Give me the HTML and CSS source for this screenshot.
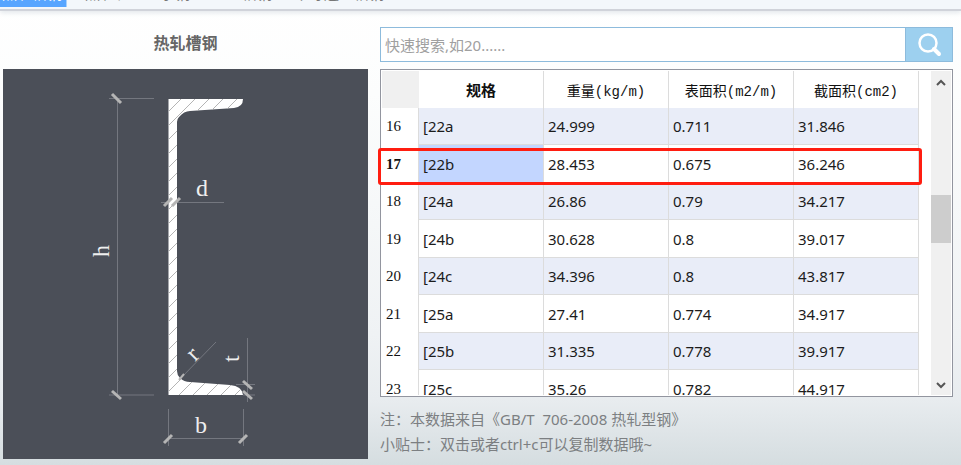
FILE: index.html
```html
<!DOCTYPE html>
<html lang="zh-CN">
<head>
<meta charset="utf-8">
<title>热轧槽钢</title>
<link rel="stylesheet" href="styles.css">
</head>
<body>
<nav class="tabs">
  <a class="tab active" href="#channel">热轧槽钢</a>
  <a class="tab" href="#ibeam">热轧轻型工字钢</a>
  <a class="tab" href="#type">工型槽钢</a>
  <a class="tab" href="#unequal">不等边型槽钢</a>
</nav>
<main class="content">
  <section class="figure">
    <h1 class="title">热轧槽钢</h1>
    <svg class="drawing" viewBox="3 69 365 390" role="img" aria-label="热轧槽钢截面">
      <defs>
        <pattern id="hatch" width="14" height="14" patternUnits="userSpaceOnUse">
          <path d="M-1 15L15 -1M-1 1L1 -1M13 15L15 13" stroke="#b4b4b4" stroke-width="1"/>
        </pattern>
      </defs>
      <g class="dim">
        <path d="M109 98.500H154M109 395H154M117.500 98V395M161 202.500H224M168.500 409V446M243.500 409V446M168 438.500H243M247.500 338V402M236 384.500H255M243 395H255M180 379L216 342"/>
      </g>
      <path class="steel" d="M168.500 99H243Q243 107 234 108L190 111Q184 111 179 117Q177 119 177 122V371Q177 375 180 378Q184 382 190 382L230 385Q242 386 243 395H168.500Z"/>
      <path fill="url(#hatch)" d="M168.500 99H243Q243 107 234 108L190 111Q184 111 179 117Q177 119 177 122V371Q177 375 180 378Q184 382 190 382L230 385Q242 386 243 395H168.500Z"/>
      <path class="tick" d="M112 94L121 103M112 391L121 399M164 206L172 198M172 206L180 198M164 443L172 435M239 443L247 435M243 381L252 389M243 391L252 399"/>
      <path class="leader" d="M179 380L184 374"/>
      <g class="letters">
        <text x="196" y="196">d</text>
        <text x="195" y="433">b</text>
        <text transform="translate(109 257) rotate(-90)">h</text>
        <text transform="translate(239 362) rotate(-90)">t</text>
        <text transform="translate(195 362) rotate(-45)">r</text>
      </g>
    </svg>
  </section>
  <section class="data">
    <form class="search">
      <input class="query" type="text" aria-label="快速搜索" placeholder="快速搜索,如20......">
      <button class="go" type="button" aria-label="搜索">
        <svg width="26" height="26" viewBox="0 0 26 26"><circle cx="12" cy="11" r="8.500" fill="none" stroke="#fff" stroke-width="2.500"/><path d="M18 17L23 22" stroke="#fff" stroke-width="4" stroke-linecap="round"/></svg>
      </button>
    </form>
    <div class="grid-wrap">
      <div class="grid">
        <div class="viewport">
        <table class="sections">
          <thead><tr><td class="corner"></td><th class="key">规格</th><th>重量(kg/m)</th><th>表面积(m2/m)</th><th>截面积(cm2)</th></tr></thead>
          <tbody>
            <tr><th>16</th><td>[22a</td><td>24.999</td><td>0.711</td><td>31.846</td></tr>
            <tr class="current"><th>17</th><td class="selected">[22b</td><td>28.453</td><td>0.675</td><td>36.246</td></tr>
            <tr><th>18</th><td>[24a</td><td>26.86</td><td>0.79</td><td>34.217</td></tr>
            <tr><th>19</th><td>[24b</td><td>30.628</td><td>0.8</td><td>39.017</td></tr>
            <tr><th>20</th><td>[24c</td><td>34.396</td><td>0.8</td><td>43.817</td></tr>
            <tr><th>21</th><td>[25a</td><td>27.41</td><td>0.774</td><td>34.917</td></tr>
            <tr><th>22</th><td>[25b</td><td>31.335</td><td>0.778</td><td>39.917</td></tr>
            <tr><th>23</th><td>[25c</td><td>35.26</td><td>0.782</td><td>44.917</td></tr>
          </tbody>
        </table>
        </div>
        <div class="scrollbar">
          <svg width="12" height="8" viewBox="0 0 12 8"><path d="M2 6L6 2L10 6"/></svg>
          <div class="track"><div class="thumb"></div></div>
          <svg width="12" height="8" viewBox="0 0 12 8"><path d="M2 2L6 6L10 2"/></svg>
        </div>
      </div>
      <div class="marker"></div>
    </div>
    <div class="notes">
      <p>注：本数据来自《GB/T&nbsp; 706-2008 热轧型钢》</p>
      <p>小贴士：双击或者ctrl+c可以复制数据哦~</p>
    </div>
  </section>
</main>
</body>
</html>
```
FILE: styles.css
```css
* {
  box-sizing: border-box;
}

body {
  margin: 0;
  height: 100vh;
  overflow: hidden;
  display: flex;
  flex-direction: column;
  font: 15px "Noto Sans", "Noto Sans CJK SC", sans-serif;
  background: linear-gradient(#ffffff, #fcfdfd 20%, #eff2f4 72%, #e8ecef 86%, #d5dde0);
}

.tabs {
  display: flex;
  flex: none;
  gap: 2px;
  height: 11px;
  align-items: flex-end;
  background: #f3f7fb;
  border-bottom: 2px solid #d0d3da;
  box-shadow: 0 2px 5px #e3e8ec;
}

.tab {
  padding: 0 10px 6px;
  line-height: 20px;
  color: #777;
  text-decoration: none;
}

.tab.active {
  margin: 0 6px 2px 0;
  padding: 0 4px 4px 2px;
  color: #fff;
  background: #57a5ff;
  border-right: 1px solid #a9d0fb;
}

.content {
  flex: 1;
  min-height: 0;
  display: grid;
  grid-template-columns: 365fr 573fr;
  gap: 12px;
  padding: 16px 8px 6px 3px;
}

.figure,
.data {
  display: flex;
  flex-direction: column;
  min-width: 0;
  min-height: 0;
}

.title {
  margin: 0;
  flex: none;
  height: 42px;
  line-height: 32px;
  text-align: center;
  font-size: 16px;
  font-weight: 700;
  color: #666;
}

.drawing {
  flex: 1;
  min-height: 0;
  width: 100%;
  background: #4b4f58;
}

.dim path {
  fill: none;
  stroke: #74777f;
}

.steel {
  fill: #fff;
}

.tick {
  stroke: #b5b5b5;
  stroke-width: 3;
}

.leader {
  stroke: #b5b5b5;
  stroke-width: 2;
}

.letters {
  font: 24px "Liberation Serif", serif;
  fill: #eee;
}

.search {
  flex: none;
  display: flex;
  height: 35px;
  border: 1px solid #8dbbdc;
  background: #fff;
}

.query {
  flex: 1;
  min-width: 0;
  border: 0;
  padding: 0 4px;
  font: inherit;
  background: transparent;
  outline: 0;
}

.query::placeholder {
  color: #a0a0a0;
}

.go {
  width: 47px;
  padding: 0;
  border: 0;
  border-left: 1px solid #8dbbdc;
  background: #9dd0ef;
  display: grid;
  place-items: center;
}

.grid-wrap {
  position: relative;
  flex: 1;
  min-height: 0;
  margin-top: 7px;
}

.grid {
  display: flex;
  height: 100%;
  border: 1px solid #92959f;
  background: #fff;
  padding: 1px;
}

.viewport {
  flex: 1;
  min-width: 0;
  overflow: hidden;
}

.sections {
  width: calc(100% - 12px);
  table-layout: fixed;
  border-collapse: separate;
  border-spacing: 0;
  color: #1c1c1c;
}

.sections td,
.sections th {
  height: 37px;
  padding: 0 4px;
  border-right: 1px solid #dcdcdc;
  border-bottom: 1px solid #dcdcdc;
  line-height: 20px;
  white-space: nowrap;
}

.sections tbody tr:nth-child(even) > * {
  height: 38px;
}

.sections thead th {
  padding: 0;
  border-bottom: 0;
  color: #111;
  font: 14px "Liberation Mono", "Noto Sans CJK SC", monospace;
}

.sections thead .key {
  font-weight: 700;
  font-size: 15px;
}

.sections thead .corner {
  width: 37px;
  background: #f0f0f0;
  border: 0;
}

.sections tbody th {
  border-bottom: 0;
  color: #111;
  text-align: left;
  font: 15px "Liberation Serif", serif;
}

.sections tbody .current th {
  font-weight: 700;
}

.sections tbody tr:nth-child(odd) td {
  background: #e9edf8;
}

.sections tbody .selected {
  background: #c3d6ff;
}

.scrollbar {
  width: 20px;
  display: flex;
  flex-direction: column;
  align-items: center;
  padding: 8px 0 6px;
  background: #f0f0f0;
}

.scrollbar svg path {
  fill: none;
  stroke: #555;
  stroke-width: 2;
}

.track {
  flex: 1;
  width: 100%;
  padding-top: 108px;
}

.thumb {
  height: 48px;
  background: #cdcdcd;
}

.marker {
  position: absolute;
  left: -2px;
  right: 31px;
  top: 79px;
  height: 37px;
  border: 3px solid #ff1d10;
  border-radius: 3px;
}

.notes {
  flex: none;
  padding: 10px 0 2px;
  color: #7c7f82;
}

.notes p {
  margin: 0;
  line-height: 25px;
}
```
